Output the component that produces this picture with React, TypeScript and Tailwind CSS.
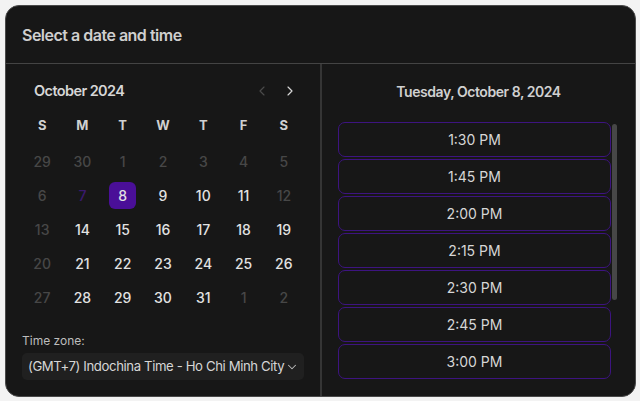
import { ChevronLeft, ChevronRight, ChevronDown } from 'lucide-react';

type Day = { n: number; tone: 'muted' | 'normal' | 'selected' | 'today' };

const weekdays = ['S', 'M', 'T', 'W', 'T', 'F', 'S'];

const weeks: Day[][] = [
  [29, 30, 1, 2, 3, 4, 5].map(n => ({ n, tone: 'muted' as const })),
  [
    { n: 6, tone: 'muted' },
    { n: 7, tone: 'today' },
    { n: 8, tone: 'selected' },
    { n: 9, tone: 'normal' },
    { n: 10, tone: 'normal' },
    { n: 11, tone: 'normal' },
    { n: 12, tone: 'muted' },
  ],
  [
    { n: 13, tone: 'muted' },
    ...[14, 15, 16, 17, 18, 19].map(n => ({ n, tone: 'normal' as const })),
  ],
  [
    { n: 20, tone: 'muted' },
    ...[21, 22, 23, 24, 25, 26].map(n => ({ n, tone: 'normal' as const })),
  ],
  [
    { n: 27, tone: 'muted' },
    ...[28, 29, 30, 31].map(n => ({ n, tone: 'normal' as const })),
    { n: 1, tone: 'muted' },
    { n: 2, tone: 'muted' },
  ],
];

const slots = ['1:30 PM', '1:45 PM', '2:00 PM', '2:15 PM', '2:30 PM', '2:45 PM', '3:00 PM'];

function DayCell({ day }: { day: Day }) {
  const tone =
    day.tone === 'muted'
      ? 'text-[#474747]'
      : day.tone === 'today'
        ? 'text-[#3a1a6e]'
        : 'text-[#e2e2e2]';
  return (
    <div className="flex h-[34px] items-center justify-center">
      {day.tone === 'selected' ? (
        <div className="flex h-[27px] w-[27px] items-center justify-center rounded-[6px] bg-[#4a0f98] text-[#e2e2e2]">
          {day.n}
        </div>
      ) : (
        <span className={tone}>{day.n}</span>
      )}
    </div>
  );
}

export default function App() {
  return (
    <div
      className="h-[401px] w-[640px] bg-[#f3f3f3] p-[5px]"
      style={{ fontFamily: 'Inter, "Noto Sans", sans-serif' }}
    >
      <div className="flex h-[392px] w-[631px] flex-col overflow-hidden rounded-[14px] border border-[#4a4a4a] bg-[#171717]">
        <div className="flex h-[58px] shrink-0 items-center border-b border-[#444] px-[16px]">
          <h1 className="text-[16px] font-semibold tracking-[-0.5px] text-[#cfcfcf]">Select a date and time</h1>
        </div>

        <div className="flex min-h-0 flex-1">
          {/* calendar */}
          <div className="flex w-[316px] flex-col border-r-2 border-[#353535] px-[16px]">
            <div className="mt-[16px] flex h-[22px] items-center justify-between pl-[12px] pr-[6px]">
              <span className="text-[14.5px] font-semibold tracking-[-0.6px] text-[#d6d6d6]">October 2024</span>
              <div className="flex items-center gap-[12px]">
                <ChevronLeft className="h-4 w-4 text-[#4a4a4a]" strokeWidth={1.75} />
                <ChevronRight className="h-4 w-4 text-[#d6d6d6]" strokeWidth={1.75} />
              </div>
            </div>
            <div className="mt-[14px] grid grid-cols-7 text-[13px] font-bold text-[#d0d0d0]">
              {weekdays.map((d, i) => (
                <div key={i} className="flex h-[20px] items-center justify-center">
                  {d}
                </div>
              ))}
            </div>
            <div className="mt-[8px] grid grid-cols-7 text-[14px] font-medium">
              {weeks.flat().map((day, i) => (
                <DayCell key={i} day={day} />
              ))}
            </div>
            <div className="mt-auto mb-[16px]">
              <div className="text-[12px] text-[#bdbdbd]">Time zone:</div>
              <div className="mt-[3px] flex h-[27px] items-center justify-between rounded-[5px] bg-[#202020] pl-[6px] pr-[5px]">
                <span className="whitespace-nowrap text-[13.2px] tracking-[-0.4px] text-[#d6d6d6]">
                  (GMT+7) Indochina Time - Ho Chi Minh City
                </span>
                <ChevronDown className="h-[14px] w-[14px] shrink-0 text-[#bdbdbd]" strokeWidth={1.75} />
              </div>
            </div>
          </div>

          {/* time slots */}
          <div className="flex flex-1 flex-col pl-[16px]">
            <div className="-ml-[16px] mt-[17px] flex h-[20px] items-center justify-center text-[14px] font-semibold tracking-[-0.45px] text-[#d0d0d0]">
              Tuesday, October 8, 2024
            </div>
            <div className="mt-[21px] flex h-[258px] gap-[1px] overflow-hidden">
              <div className="flex w-[273px] flex-col gap-[2px]">
                {slots.map(s => (
                  <div
                    key={s}
                    className="flex h-[35px] shrink-0 items-center justify-center rounded-[7px] border border-[#3d1480] text-[14px] text-[#d6d6d6]"
                  >
                    {s}
                  </div>
                ))}
              </div>
              <div className="mt-[2px] h-[176px] w-[5px] rounded-full bg-[#474747]" />
            </div>
          </div>
        </div>
      </div>
    </div>
  );
}
